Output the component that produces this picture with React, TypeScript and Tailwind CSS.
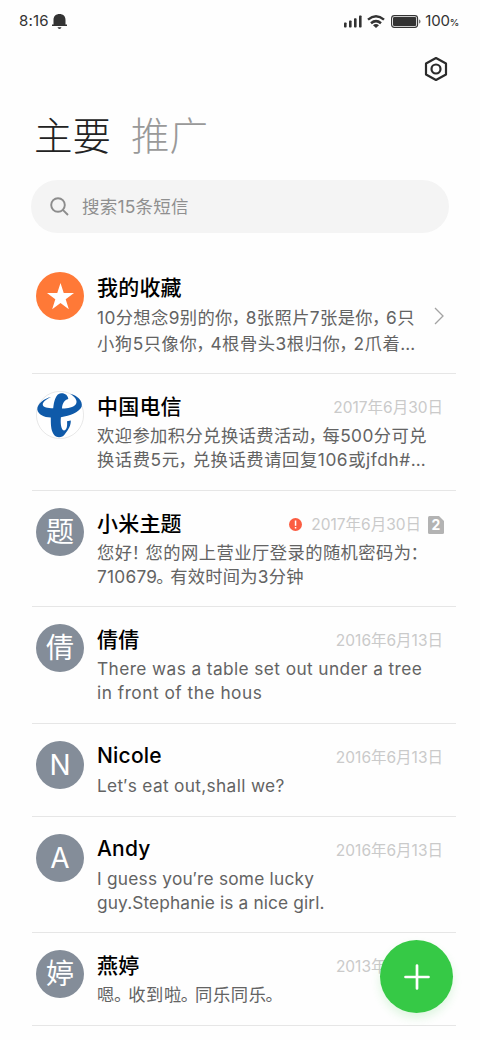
import React from 'react';

type Line = { text: string; className: string };

type Message = {
  name: string;
  nameClass?: string;
  avatar: string;
  rowClass: string;
  date?: string;
  lines: Line[];
  lineClass?: string;
  alert?: boolean;
  sim?: string;
  arrow?: boolean;
};

const TelecomLogo = () => (
  <svg viewBox="0 0 48 48" className="w-12 h-12">
    <circle cx="24" cy="24" r="23.6" fill="#fff" stroke="#e2e2e2" strokeWidth="0.8" />
    <path
      d="M15.500 5.800C8 7.500 1 13 1.300 18.500C2 23.500 8 26.300 14.800 26.600C14.800 33 14.800 39 17.500 43C20 47.300 26 47.500 29 43C32.500 38.500 35 34.500 34.800 29.500L31 30.300C31.500 35 30.800 39 28.300 39.500C25 39.500 24.300 32 24.900 26.200C34 25 43.500 21 45.700 15.500C47 9.500 41 4.500 34 2.800C38.500 5.500 42 9.500 40 13C37.500 16.600 31 17.600 26 17.500C26.300 13 28 9 32.300 8C32 4.500 29 2 25 2.300C19.500 2.800 18 10.500 17.200 17.300C11.500 17 7.300 16.500 6.800 14C6.300 11 11 8 15.500 5.800Z"
      fill="#0f5aa9"
    />
  </svg>
);

const MESSAGES: Message[] = [
  {
    name: '我的收藏',
    avatar: 'star',
    rowClass: 'h-[119px]',
    lines: [
      { text: '10分想念9别的你，8张照片7张是你，6只', className: 'tracking-[0.38px]' },
      { text: '小狗5只像你，4根骨头3根归你，2爪着…', className: 'tracking-[0.55px]' },
    ],
    lineClass: 'leading-[26px]',
    arrow: true,
  },
  {
    name: '中国电信',
    avatar: 'telecom',
    rowClass: 'h-[117px]',
    date: '2017年6月30日',
    lines: [
      { text: '欢迎参加积分兑换话费活动，每500分可兑', className: 'tracking-[0.42px]' },
      { text: '换话费5元，兑换话费请回复106或jfdh#…', className: 'tracking-[0.58px]' },
    ],
  },
  {
    name: '小米主题',
    avatar: '题',
    rowClass: 'h-[116px]',
    date: '2017年6月30日',
    lines: [
      { text: '您好！您的网上营业厅登录的随机密码为：', className: 'tracking-[0.45px]' },
      { text: '710679。有效时间为3分钟', className: 'tracking-[0.25px]' },
    ],
    alert: true,
    sim: '2',
  },
  {
    name: '倩倩',
    avatar: '倩',
    rowClass: 'h-[117px]',
    date: '2016年6月13日',
    lines: [
      { text: 'There was a table set out under a tree', className: 'tracking-[0.4px]' },
      { text: 'in front of the hous', className: 'tracking-[0.5px]' },
    ],
  },
  {
    name: 'Nicole',
    nameClass: 'leading-[29px]',
    avatar: 'N',
    rowClass: 'h-[93px]',
    date: '2016年6月13日',
    lines: [{ text: 'Let′s eat out,shall we?', className: 'tracking-[0.33px]' }],
  },
  {
    name: 'Andy',
    nameClass: 'leading-[29px]',
    avatar: 'A',
    rowClass: 'h-[116px]',
    date: '2016年6月13日',
    lines: [
      { text: 'I guess you′re some lucky', className: 'tracking-[0.23px]' },
      { text: 'guy.Stephanie is a nice girl.', className: 'tracking-[0.13px]' },
    ],
  },
  {
    name: '燕婷',
    avatar: '婷',
    rowClass: 'h-[93px]',
    date: '2013年6月13日',
    lines: [{ text: '嗯。收到啦。同乐同乐。', className: 'tracking-[0.6px]' }],
  },
];

// Full-width punctuation is set narrower than a whole character
const Punctuated = ({ text }: { text: string }) => (
  <>
    {text.split(/([，。！：])/).map((part, i) =>
      /^[，。！：]$/.test(part) ? (
        <span key={i} className="-ml-px mr-[5px] [font-feature-settings:'halt']">{part}</span>
      ) : (
        part
      )
    )}
  </>
);

const Avatar = ({ value }: { value: string }) => {
  if (value === 'telecom') return <TelecomLogo />;
  if (value === 'star') {
    return (
      <div className="w-12 h-12 rounded-full bg-[#ff7937] flex items-center justify-center">
        <svg viewBox="0 0 26 26" className="w-[27px] h-[27px]" fill="#fff">
          <path d="M13 0L16.100 9.700H26L18 15.700L21 25.200L13 19.300L5 25.200L8 15.700L0 9.700H9.900Z" />
        </svg>
      </div>
    );
  }
  return (
    <div className="w-12 h-12 rounded-full bg-[#848d99] text-white text-[28px] leading-none flex items-center justify-center">
      <span>{value}</span>
    </div>
  );
};

const MessageRow = ({ message }: { message: Message }) => (
  <div className={`${message.rowClass} flex items-start pt-[17px] pl-1 border-b border-[#e6e6e6]`}>
    <div className="shrink-0">
      <Avatar value={message.avatar} />
    </div>
    <div className="flex-1 min-w-0 ml-[13px]">
      <div className="flex items-center h-[33px] pr-[13px]">
        <h2 className={`flex-1 text-[21px] h-[33px] font-medium text-black tracking-[0.2px] ${message.nameClass || 'leading-[31px]'}`}>
          {message.name}
        </h2>
        {message.alert && (
          <svg viewBox="0 0 13 13" className="w-[13px] h-[13px] mr-[9px]" fill="#fff">
            <circle cx="6.500" cy="6.500" r="6.500" fill="#fb5d42" />
            <rect x="5.800" y="2.500" width="1.500" height="5.300" />
            <rect x="5.800" y="9" width="1.500" height="1.500" />
          </svg>
        )}
        {message.date && (
          <span className="text-[15.500px] leading-[33px] text-[#cacaca]">{message.date}</span>
        )}
        {message.sim && (
          <svg viewBox="0 0 16 18" className="w-4 h-[18px] ml-[7px] -mr-px">
            <path d="M1.500 0H11L16 5V16.500Q16 18 14.500 18H1.500Q0 18 0 16.500V1.500Q0 0 1.500 0Z" fill="#b3b3b3" />
            <text x="8" y="14.300" textAnchor="middle" fontSize="14" fontWeight="700" fill="#fff">{message.sim}</text>
          </svg>
        )}
      </div>
      <div className={`text-[17.300px] text-[#636363] whitespace-nowrap ${message.lineClass || 'leading-[24px]'}`}>
        {message.lines.map((line) => (
          <p key={line.text} className={line.className}>
            <Punctuated text={line.text} />
          </p>
        ))}
      </div>
    </div>
    {message.arrow && (
      <svg viewBox="0 0 10 18" className="w-[10px] h-[18px] mt-[35px] mr-[12px] shrink-0" fill="none" stroke="#a3a3a3" strokeWidth="1.300">
        <path d="M1 1L9 9L1 17" />
      </svg>
    )}
  </div>
);

const StatusBar = () => (
  <div className="h-[42px] pl-[19px] pr-[21px] flex items-center text-[#333] text-[15px]">
    <span className="tracking-[0.2px]">8:16</span>
    <svg viewBox="0 0 15 15" className="w-[15px] h-[15px] ml-[3px]" fill="#333">
      <path d="M1.500 10.500V6C1.500 2 4 0 7.500 0S13.500 2 13.500 6V10.500H15V12H0V10.500Z" />
      <path d="M5.500 13.300H9.500Q9 15 7.500 15T5.500 13.300Z" />
    </svg>
    <div className="flex-1" />
    <svg viewBox="0 0 18 13" className="w-[18px] h-[13px]" fill="#333">
      <rect x="0" y="7.500" width="2.600" height="5" rx="0.800" />
      <rect x="5" y="5.500" width="2.600" height="7" rx="0.800" />
      <rect x="10" y="3.300" width="2.600" height="9.200" rx="0.800" />
      <rect x="15" y="0.500" width="2.600" height="12" rx="0.800" />
    </svg>
    <svg viewBox="0 0 18 13" className="w-[18px] h-[13px] ml-[5px]" fill="none" stroke="#333" strokeWidth="2.500">
      <path d="M1 4.600Q9 -2 17 4.600" />
      <path d="M4 8.200Q9 4 14 8.200" />
      <path d="M6 10.200Q9 8 12 10.200L9 13Z" fill="#333" stroke="none" />
    </svg>
    <svg viewBox="0 0 30 13" className="w-[30px] h-[13px] ml-[6px]">
      <rect x="0.600" y="0.600" width="26" height="11.800" rx="2.800" fill="none" stroke="#333" strokeWidth="1.100" />
      <rect x="2" y="2" width="23.200" height="9" rx="1.300" fill="#333" />
      <path d="M28 4.500Q29.500 4.500 29.500 6.500T28 8.500Z" fill="#777" />
    </svg>
    <span className="ml-[4px] tracking-[-0.2px]">
      100<span className="text-[9.500px] font-medium">%</span>
    </span>
  </div>
);

export default function App() {
  return (
    <div
      lang="zh-CN"
      className="relative w-[480px] h-[1040px] bg-[#fefefe] overflow-hidden font-['Inter','Noto_Sans_CJK_SC',sans-serif]"
    >
      <StatusBar />

      <div className="h-[54px] pr-[32px] flex justify-end items-center">
        <svg viewBox="0 0 24 26" className="w-[24px] h-[26px]" fill="none" stroke="#2b2b2b" strokeWidth="2.200" strokeLinejoin="round">
          <path d="M12 2L22 7.500V18.500L12 24L2 18.500V7.500Z" />
          <circle cx="12" cy="13" r="4.500" />
        </svg>
      </div>

      <div className="h-[84px] pl-[34px] flex items-center text-[38.500px] leading-[81px] font-light">
        <h1 className="h-[84px] text-[#222]">主要</h1>
        <span className="h-[84px] ml-[20px] text-[#999]">推广</span>
      </div>

      <div className="mx-[31px] h-[53px] rounded-full bg-[#f4f4f4] flex items-center pl-[19px] text-[17.500px] text-[#8f8f8f]">
        <svg viewBox="0 0 19 19" className="w-[19px] h-[19px]" fill="none" stroke="#8c8c8c" strokeWidth="1.900">
          <circle cx="8" cy="8" r="6.800" />
          <path d="M12.800 12.800L18 18" />
        </svg>
        <span className="ml-[13px] pt-px tracking-[0.2px]">搜索15条短信</span>
      </div>

      <div className="mt-[22px] ml-[32px] mr-[24px]">
        {MESSAGES.map((message) => (
          <MessageRow key={message.name} message={message} />
        ))}
      </div>

      <button
        aria-label="新建短信"
        className="absolute left-[380px] top-[940px] w-[73px] h-[73px] rounded-full bg-[#36c946] shadow-[0_5px_10px_rgba(54,201,70,0.16)] flex items-center justify-center"
      >
        <svg viewBox="0 0 26 26" className="w-[26px] h-[26px]" stroke="#fff" strokeWidth="2.700" strokeLinecap="round">
          <path d="M13 1.500V24.500M1.500 13H24.500" />
        </svg>
      </button>
    </div>
  );
}
